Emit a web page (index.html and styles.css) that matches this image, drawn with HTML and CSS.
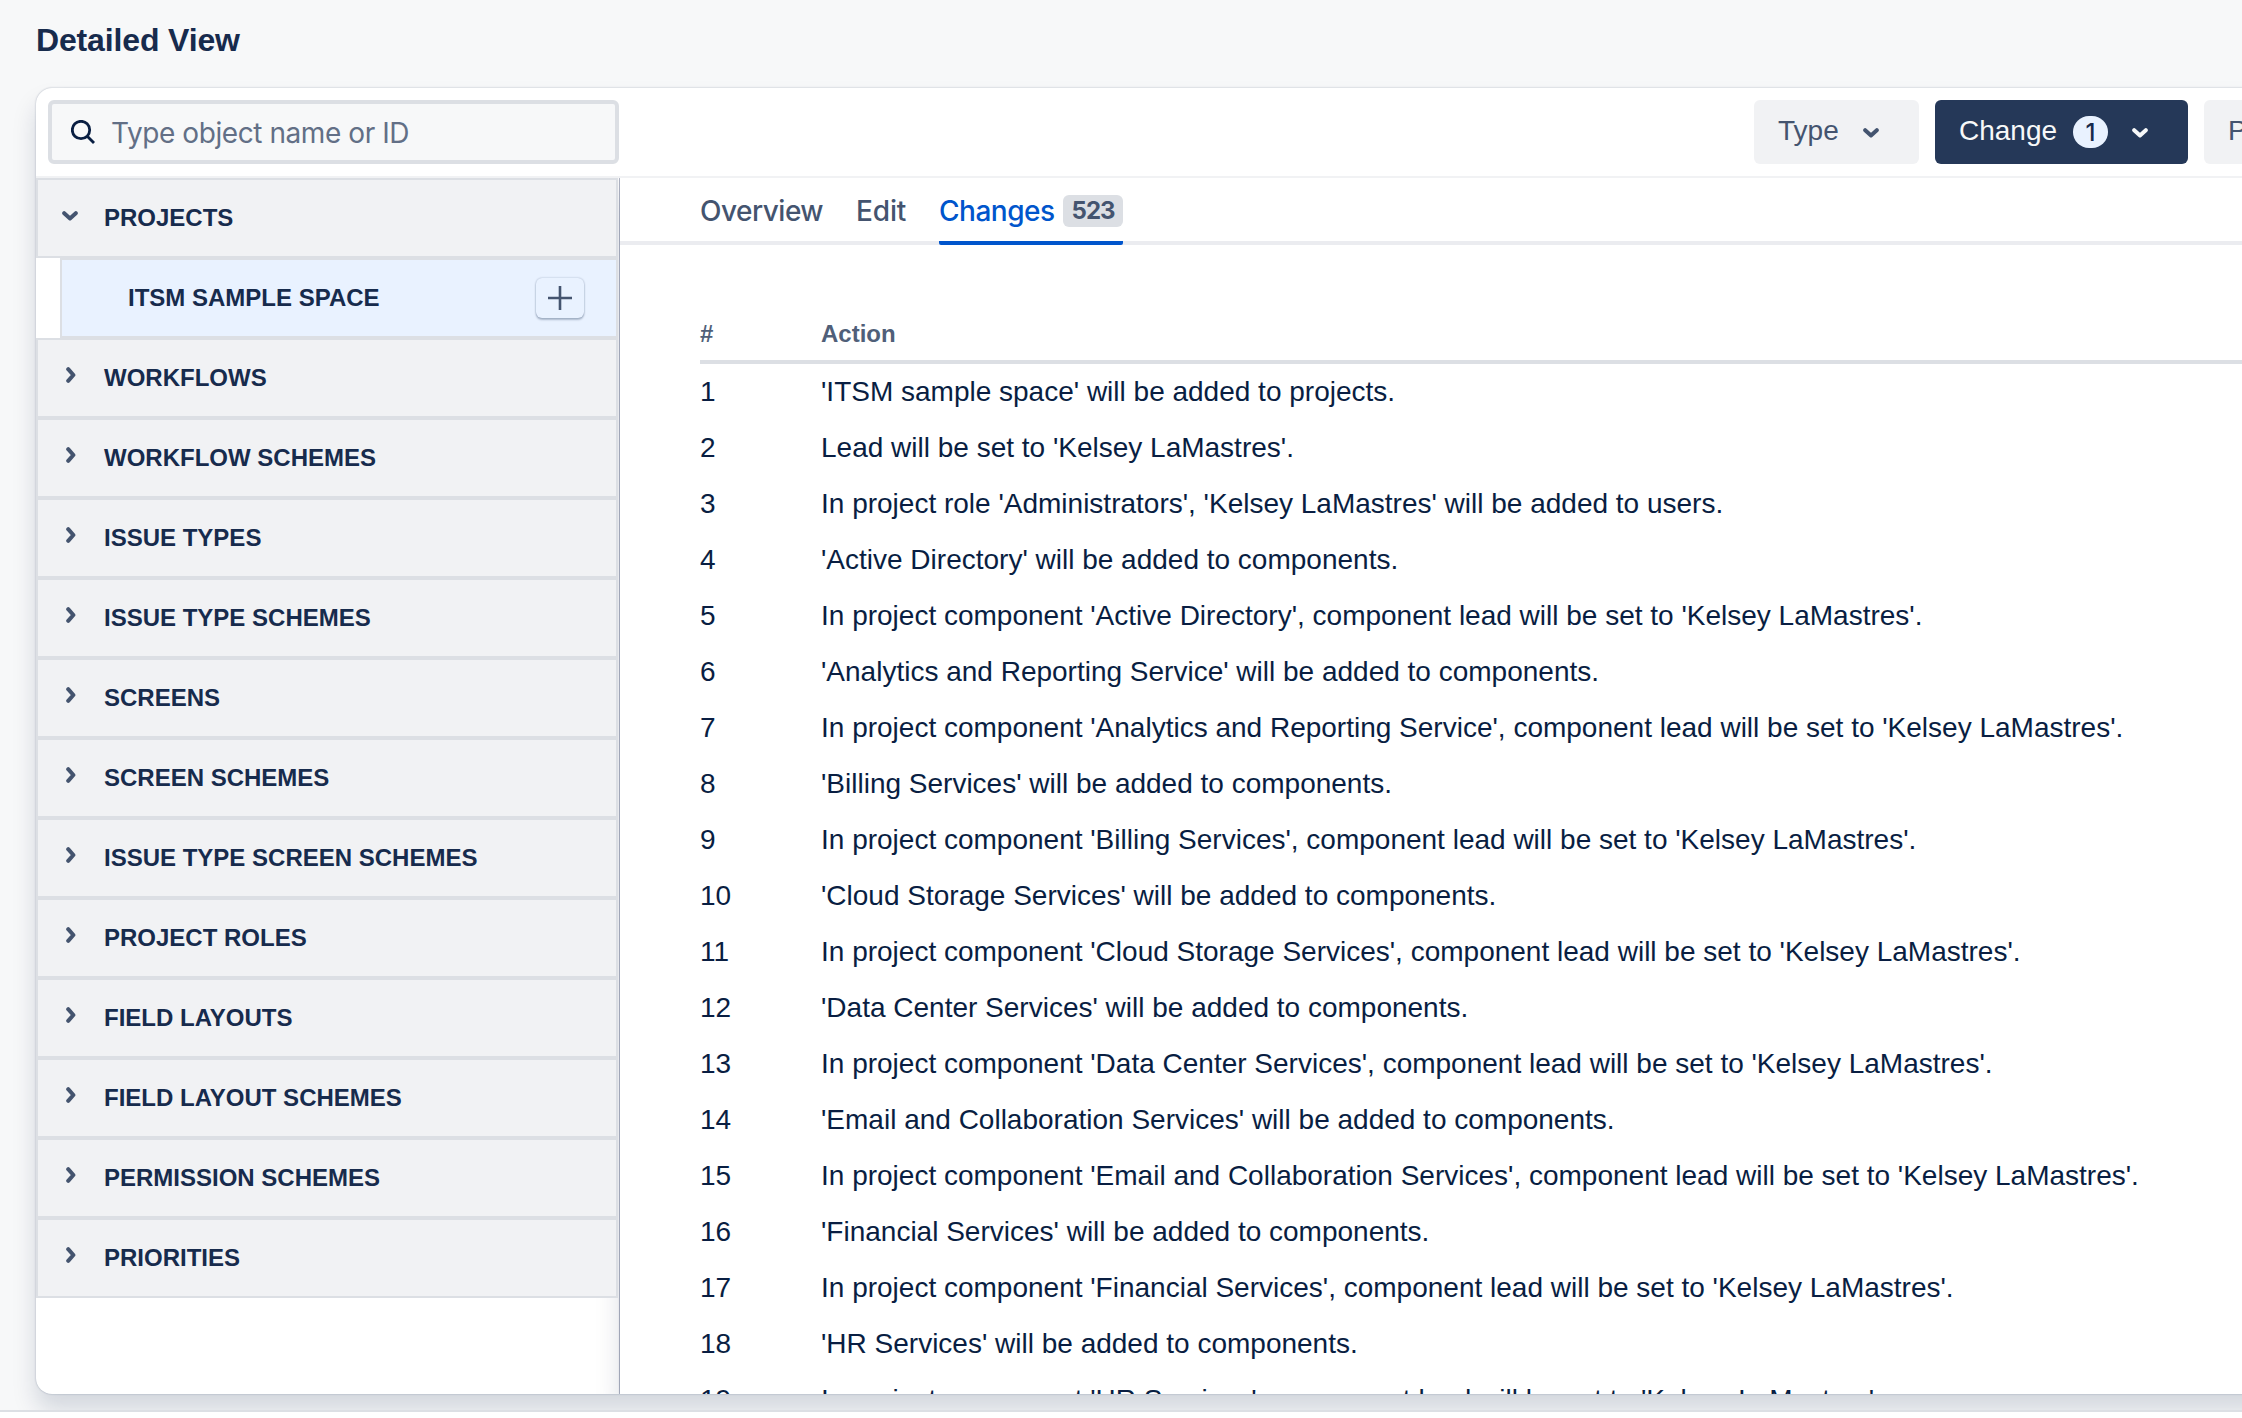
FILE: index.html
```html
<!DOCTYPE html>
<html lang="en">
<head>
<meta charset="utf-8">
<title>Detailed View</title>
<link rel="stylesheet" href="styles.css">
</head>
<body>
<svg class="defs" aria-hidden="true">
  <symbol id="down" viewBox="0 0 16 10"><path d="M2.2 2.2 8 7.4l5.8-5.2"/></symbol>
  <symbol id="right" viewBox="0 0 10 16"><path d="M2.2 2.2 7.4 8l-5.2 5.8"/></symbol>
</svg>
<main class="page">
  <h1 class="title">Detailed View</h1>
  <section class="panel">
    <header class="toolbar">
      <div class="search">
        <svg class="search-icon" viewBox="0 0 24 24"><circle cx="10" cy="10" r="8.7"/><path d="m16 16 7 7"/></svg>
        <span>Type object name or ID</span>
      </div>
      <div class="filters">
        <button class="filter type">Type<svg class="down"><use href="#down"/></svg></button>
        <button class="filter change active">Change<span class="count">1</span><svg class="down"><use href="#down"/></svg></button>
        <button class="filter more">P</button>
      </div>
    </header>
    <div class="body">
      <aside class="sidebar">
        <ul class="tree">
          <li class="group"><svg class="down"><use href="#down"/></svg>PROJECTS</li>
          <li class="group child">ITSM SAMPLE SPACE<button class="add"><svg viewBox="0 0 24 24"><path d="M12 0v24M0 12h24"/></svg></button></li>
          <li class="group"><svg class="right"><use href="#right"/></svg>WORKFLOWS</li>
          <li class="group"><svg class="right"><use href="#right"/></svg>WORKFLOW SCHEMES</li>
          <li class="group"><svg class="right"><use href="#right"/></svg>ISSUE TYPES</li>
          <li class="group"><svg class="right"><use href="#right"/></svg>ISSUE TYPE SCHEMES</li>
          <li class="group"><svg class="right"><use href="#right"/></svg>SCREENS</li>
          <li class="group"><svg class="right"><use href="#right"/></svg>SCREEN SCHEMES</li>
          <li class="group"><svg class="right"><use href="#right"/></svg>ISSUE TYPE SCREEN SCHEMES</li>
          <li class="group"><svg class="right"><use href="#right"/></svg>PROJECT ROLES</li>
          <li class="group"><svg class="right"><use href="#right"/></svg>FIELD LAYOUTS</li>
          <li class="group"><svg class="right"><use href="#right"/></svg>FIELD LAYOUT SCHEMES</li>
          <li class="group"><svg class="right"><use href="#right"/></svg>PERMISSION SCHEMES</li>
          <li class="group"><svg class="right"><use href="#right"/></svg>PRIORITIES</li>
        </ul>
      </aside>
      <div class="content">
        <nav class="tabs">
          <a class="tab">Overview</a>
          <a class="tab edit">Edit</a>
          <a class="tab current">Changes<span class="badge">523</span></a>
        </nav>
        <table class="changes">
          <thead><tr><th class="num">#</th><th>Action</th></tr></thead>
          <tbody>
            <tr><td>1</td><td>'ITSM sample space' will be added to projects.</td></tr>
            <tr><td>2</td><td>Lead will be set to 'Kelsey LaMastres'.</td></tr>
            <tr><td>3</td><td>In project role 'Administrators', 'Kelsey LaMastres' will be added to users.</td></tr>
            <tr><td>4</td><td>'Active Directory' will be added to components.</td></tr>
            <tr><td>5</td><td>In project component 'Active Directory', component lead will be set to 'Kelsey LaMastres'.</td></tr>
            <tr><td>6</td><td>'Analytics and Reporting Service' will be added to components.</td></tr>
            <tr><td>7</td><td>In project component 'Analytics and Reporting Service', component lead will be set to 'Kelsey LaMastres'.</td></tr>
            <tr><td>8</td><td>'Billing Services' will be added to components.</td></tr>
            <tr><td>9</td><td>In project component 'Billing Services', component lead will be set to 'Kelsey LaMastres'.</td></tr>
            <tr><td>10</td><td>'Cloud Storage Services' will be added to components.</td></tr>
            <tr><td>11</td><td>In project component 'Cloud Storage Services', component lead will be set to 'Kelsey LaMastres'.</td></tr>
            <tr><td>12</td><td>'Data Center Services' will be added to components.</td></tr>
            <tr><td>13</td><td>In project component 'Data Center Services', component lead will be set to 'Kelsey LaMastres'.</td></tr>
            <tr><td>14</td><td>'Email and Collaboration Services' will be added to components.</td></tr>
            <tr><td>15</td><td>In project component 'Email and Collaboration Services', component lead will be set to 'Kelsey LaMastres'.</td></tr>
            <tr><td>16</td><td>'Financial Services' will be added to components.</td></tr>
            <tr><td>17</td><td>In project component 'Financial Services', component lead will be set to 'Kelsey LaMastres'.</td></tr>
            <tr><td>18</td><td>'HR Services' will be added to components.</td></tr>
            <tr><td>19</td><td>In project component 'HR Services', component lead will be set to 'Kelsey LaMastres'.</td></tr>
          </tbody>
        </table>
      </div>
    </div>
  </section>
</main>
</body>
</html>
```
FILE: styles.css
```css
* { box-sizing: border-box; }

body {
  margin: 0;
  height: 1418px;
  overflow: hidden;
  background: #fff;
  color: #172b4d;
  font-family: "Liberation Sans", Arial, sans-serif;
}

button { font-family: inherit; border: 0; margin: 0; }
svg { display: block; flex: none; fill: none; stroke: currentColor; }

.defs { display: none; }
.down { width: 16px; height: 10px; stroke-width: 4; stroke-linecap: round; stroke-linejoin: round; }
.right { width: 10px; height: 16px; stroke-width: 4; stroke-linecap: round; stroke-linejoin: round; }

.page {
  height: 1412px;
  overflow: hidden;
  padding: 20px 0 0 36px;
  background: #f7f8f9;
  border-bottom: 2px solid #dcdfe4;
}

.title {
  margin: 0 0 28px;
  font-size: 32px;
  line-height: 40px;
  font-weight: 700;
  letter-spacing: -0.15px;
}

.panel {
  display: flex;
  flex-direction: column;
  width: 2400px;
  height: 1306px;
  background: #fff;
  border-radius: 16px;
  box-shadow: 0 16px 24px rgba(9, 30, 66, .15), 0 0 2px rgba(9, 30, 66, .31);
}

.toolbar {
  display: flex;
  align-items: center;
  height: 90px;
  flex: none;
  padding: 0 0 0 12px;
  border-bottom: 2px solid #f1f2f4;
}

.search {
  display: flex;
  align-items: center;
  width: 571px;
  height: 64px;
  padding: 0 0 0 19px;
  border: 4px solid #dcdfe4;
  border-radius: 6px;
  background: #f7f8f9;
  color: #626f86;
  font: 28px/40px Inter, sans-serif;
  letter-spacing: -0.42px;
}
.search span { padding-top: 2px; }
.search-icon { width: 24px; height: 24px; margin-right: 16px; stroke: #091e42; stroke-width: 2.8; }

.filters { display: flex; gap: 16px; margin-left: 1135px; }
.filter {
  display: flex;
  align-items: center;
  height: 64px;
  padding: 0 0 2px 24px;
  border-radius: 6px;
  background: #f1f2f4;
  color: #44546f;
  font-size: 28px;
  flex: none;
}
.type { width: 165px; }
.type .down { margin-left: 24px; }
.filter .down { margin-top: 4px; }
.change { width: 253px; }
.change .down { margin-left: 24px; }
.more { width: 190px; }
.active { background: #253858; color: #f7f8f9; }
.count {
  width: 35px;
  height: 32px;
  margin: 2px 0 0 16px;
  border-radius: 16px;
  background: #e9f2ff;
  color: #172b4d;
  font: 500 24px/33px Inter, sans-serif;
  text-align: center;
}

.body { display: flex; flex: 1; min-height: 0; overflow: hidden; border-radius: 0 0 16px 16px; }

.sidebar { width: 584px; flex: none; }
.tree { position: relative; z-index: 1; width: 582px; margin: 0; padding: 0; list-style: none; }
.group {
  display: flex;
  align-items: center;
  height: 80px;
  padding-left: 24px;
  border: 2px solid #dcdfe4;
  background: #f1f2f4;
  font-size: 24px;
  font-weight: 700;
}
.group > .down { margin: 0 26px 4px 0; color: #44546f; }
.group > .right { margin: 0 28px 7px 4px; color: #44546f; }
.child { margin-left: 24px; padding: 0 32px 0 66px; justify-content: space-between; background: #e9f2ff; }
.add {
  display: flex;
  align-items: center;
  justify-content: center;
  width: 48px;
  height: 40px;
  padding: 0;
  border-radius: 6px;
  background: #e9f2ff;
  box-shadow: 0 2px 2px rgba(9, 30, 66, .25), 0 0 2px rgba(9, 30, 66, .31);
  color: #44546f;
}
.add svg { width: 24px; height: 24px; stroke-width: 2.6; }

.content {
  flex: 1;
  min-width: 0;
  background: #fff;
  box-shadow: 0 16px 24px rgba(9, 30, 66, .15), 0 0 2px rgba(9, 30, 66, .31), -1px 0 0 #c0c4d0;
}

.tabs {
  display: flex;
  align-items: flex-start;
  height: 67px;
  padding-left: 80px;
  border-bottom: 4px solid #ebecf0;
  font: 500 28px/67px Inter, sans-serif;
  letter-spacing: -0.5px;
  color: #44546f;
}
.tab { display: flex; align-items: center; height: 67px; padding: 2px 0 3px; line-height: 62px; }
.edit { margin: 0 33px; letter-spacing: -0.2px; }
.current { width: 184px; justify-content: space-between; color: #0055cc; border-bottom: 4px solid #0055cc; padding-bottom: 0; border-radius: 0 0 2px 2px; }
.badge {
  width: 60px;
  height: 32px;
  border-radius: 6px;
  background: #dcdfe4;
  color: #44546f;
  font: 700 24px/32px Inter, sans-serif;
  letter-spacing: -1px;
  text-align: center;
}

.changes { width: 1700px; margin: 61px 0 0 80px; border-collapse: separate; border-spacing: 0; table-layout: fixed; }
.changes th {
  height: 58px;
  padding: 2px 0 0;
  border-bottom: 4px solid #dcdfe4;
  color: #505f79;
  font-size: 24px;
  line-height: 32px;
  text-align: left;
}
.changes .num { width: 121px; }
.changes td { height: 56px; padding: 0; color: #091e42; font-size: 28px; line-height: 56px; white-space: nowrap; }
```
